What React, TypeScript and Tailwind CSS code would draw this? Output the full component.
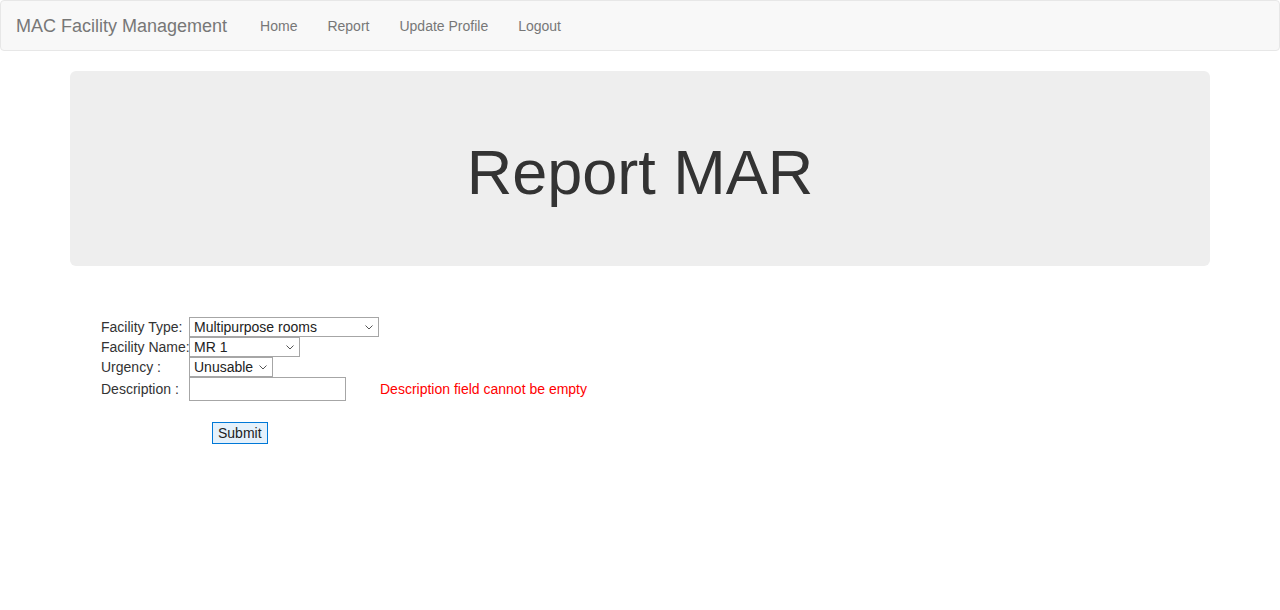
import React from "react";

function Chevron() {
  return (
    <svg width="8" height="5" viewBox="0 0 8 5" className="ml-auto mr-[5px]">
      <path d="M0.5 0.5 L4 4 L7.5 0.5" fill="none" stroke="#555" strokeWidth="1" />
    </svg>
  );
}

function FakeSelect({ value, width }: { value: string; width: string }) {
  return (
    <div className={`flex items-center h-[20px] ${width} border border-[#a6a6a6] bg-white pl-[4px] text-[14px] leading-none text-[#222]`}>
      <span>{value}</span>
      <Chevron />
    </div>
  );
}

export default function App() {
  return (
    <div className="min-h-[610px] bg-white font-['Liberation_Sans',Arial,sans-serif] text-[14px] leading-[20px] text-[#333]">
      <header className="h-[51px] border border-[#e7e7e7] bg-[#f8f8f8] rounded-[4px] flex items-center">
        <span className="pl-[15px] pr-[18px] text-[18px] text-[#777]">MAC Facility Management</span>
        <nav>
          <ul className="flex text-[#777]">
            <li className="px-[15px]">Home</li>
            <li className="px-[15px]">Report</li>
            <li className="px-[15px]">Update Profile</li>
            <li className="px-[15px]">Logout</li>
          </ul>
        </nav>
      </header>

      <div className="w-[1140px] mx-auto mt-[20px]">
        <div className="h-[195px] bg-[#eee] rounded-[6px] flex items-center justify-center">
          <h1 className="text-[63px] leading-none text-[#333] mt-[7px]">Report MAR</h1>
        </div>

        <div className="mt-[51px] pl-[31px]">
          <div className="grid grid-cols-[88px_auto] items-center">
            <span className="whitespace-nowrap">Facility Type:</span>
            <FakeSelect value="Multipurpose rooms" width="w-[190px]" />
            <span className="whitespace-nowrap">Facility Name:</span>
            <FakeSelect value="MR 1" width="w-[111px]" />
            <span className="whitespace-nowrap">Urgency :</span>
            <FakeSelect value="Unusable" width="w-[84px]" />
            <span className="whitespace-nowrap">Description :</span>
            <div className="flex items-center">
              <div className="h-[24px] w-[157px] border border-[#a6a6a6] bg-white" />
              <span className="ml-[34px] text-[#ff0000]">Description field cannot be empty</span>
            </div>
          </div>
          <div className="mt-[21px] pl-[111px]">
            <button className="h-[22px] px-[5px] border border-[#0078d7] bg-[#e5f1fb] text-[14px] leading-none text-[#222]">
              Submit
            </button>
          </div>
        </div>
      </div>
    </div>
  );
}
